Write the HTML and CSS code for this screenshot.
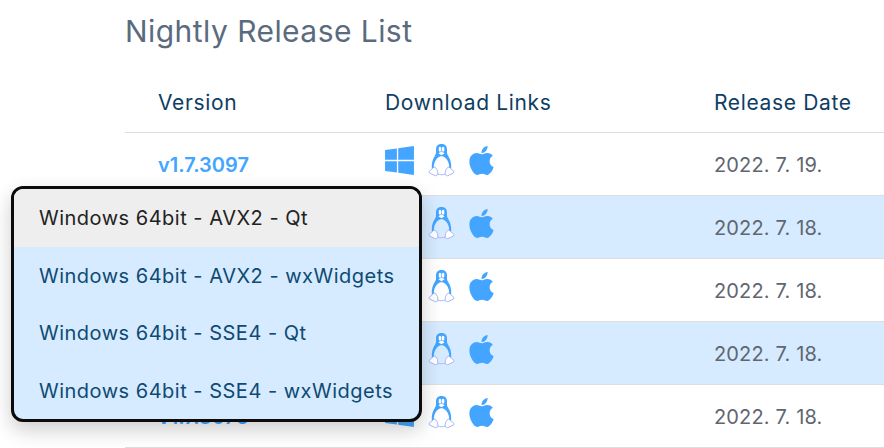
FILE: index.html
```html
<!DOCTYPE html>
<html lang="en">
<head>
    <meta charset="UTF-8">
    <meta name="viewport" content="width=device-width, initial-scale=1.0">
    <title>Nightly Release List</title>
    <link rel="stylesheet" href="styles.css">
</head>
<body>
    <svg class="sprites" width="0" height="0">
        <symbol id="ico-win" viewBox="0 0 448 512">
            <path d="M0 93.7l183.6-25.3v177.4H0V93.7zm0 324.6l183.6 25.3V268.4H0v149.9zm203.8 28L448 480V268.4H203.8v177.9zm0-380.6v180.1H448V32L203.8 65.7z"/>
        </symbol>
        <symbol id="ico-tux" viewBox="0 0 27 34">
            <path class="tux-foot" d="M6 24 L1 28.5 L1.5 30 L7.5 32.8 L10 31.5 L9.5 27.5 L7.5 24.5 Z M21 24 L26 28.5 L25.5 30 L19.5 32.8 L17 31.5 L17.5 27.5 L19.5 24.5 Z"/>
            <path class="tux-foot" d="M10 31.2 C12 31.9 15 31.9 17 31.2"/>
            <path class="tux-fill" d="M13.5 1 C9.3 1 8 3.6 8 6.8 C8 9.8 8.2 10.8 6.8 13 C5 15.7 3.4 19.6 3.8 25.4 L5.8 24.2 C5.6 20.8 7.1 17.7 9 15.4 C10.6 13.8 12 13.2 13.5 13.2 C15 13.2 16.4 13.8 18 15.4 C19.9 17.7 21.4 20.8 21.2 24.2 L23.2 25.4 C23.6 19.6 22 15.7 20.2 13 C18.8 10.8 19 9.8 19 6.8 C19 3.6 17.7 1 13.5 1 Z"/>
            <path class="tux-eye" d="M10.8 6.2a1.3 1.8 0 1 0 2.4 0a1.3 1.8 0 1 0-2.4 0zM13.9 6.2a1.3 1.8 0 1 0 2.4 0a1.3 1.8 0 1 0-2.4 0z"/>
            <path class="tux-eye" d="M10.3 10.2 L13.5 8.6 L16.7 10.2 L13.5 12.2 Z"/>
        </symbol>
        <symbol id="ico-apple" viewBox="0 0 384 512">
            <path d="M318.7 268.7c-.2-36.7 16.4-64.4 50-84.8-18.8-26.9-47.2-41.7-84.7-44.6-35.5-2.8-74.3 20.7-88.5 20.7-15 0-49.4-19.7-76.4-19.7C63.3 141.2 4 184.8 4 273.5q0 39.3 14.4 81.2c12.8 36.7 59 126.7 107.2 125.2 25.2-.6 43-17.9 75.8-17.9 31.8 0 48.3 17.9 76.4 17.9 48.6-.7 90.4-82.5 102.6-119.3-65.2-30.7-61.7-90-61.7-91.9zm-56.6-164.2c27.3-32.4 24.8-61.9 24-72.5-24.1 1.4-52 16.4-67.9 34.9-17.5 19.8-27.8 44.3-25.6 71.9 26.1 2 49.9-11.4 69.5-34.3z"/>
        </symbol>
    </svg>

    <div class="content">
        <h2>Nightly Release List</h2>
        <table class="releases">
            <thead>
                <tr>
                    <th class="col-version">Version</th>
                    <th class="col-links">Download Links</th>
                    <th class="col-date">Release Date</th>
                </tr>
            </thead>
            <tbody>
                <tr>
                    <td><a href="#">v1.7.3097</a></td>
                    <td><div class="links">
                        <svg class="ico win"><use href="#ico-win"/></svg>
                        <svg class="ico tux"><use href="#ico-tux"/></svg>
                        <svg class="ico apple"><use href="#ico-apple"/></svg>
                    </div></td>
                    <td class="date">2022. 7. 19.</td>
                </tr>
                <tr>
                    <td></td>
                    <td><div class="links">
                        <svg class="ico win"><use href="#ico-win"/></svg>
                        <svg class="ico tux"><use href="#ico-tux"/></svg>
                        <svg class="ico apple"><use href="#ico-apple"/></svg>
                    </div></td>
                    <td class="date">2022. 7. 18.</td>
                </tr>
                <tr>
                    <td></td>
                    <td><div class="links">
                        <svg class="ico win"><use href="#ico-win"/></svg>
                        <svg class="ico tux"><use href="#ico-tux"/></svg>
                        <svg class="ico apple"><use href="#ico-apple"/></svg>
                    </div></td>
                    <td class="date">2022. 7. 18.</td>
                </tr>
                <tr>
                    <td></td>
                    <td><div class="links">
                        <svg class="ico win"><use href="#ico-win"/></svg>
                        <svg class="ico tux"><use href="#ico-tux"/></svg>
                        <svg class="ico apple"><use href="#ico-apple"/></svg>
                    </div></td>
                    <td class="date">2022. 7. 18.</td>
                </tr>
                <tr>
                    <td><a href="#">v1.7.3076</a></td>
                    <td><div class="links">
                        <svg class="ico win"><use href="#ico-win"/></svg>
                        <svg class="ico tux"><use href="#ico-tux"/></svg>
                        <svg class="ico apple"><use href="#ico-apple"/></svg>
                    </div></td>
                    <td class="date">2022. 7. 18.</td>
                </tr>
            </tbody>
        </table>
    </div>

    <ul class="menu">
        <li class="active">Windows 64bit - AVX2 - Qt</li>
        <li>Windows 64bit - AVX2 - wxWidgets</li>
        <li>Windows 64bit - SSE4 - Qt</li>
        <li>Windows 64bit - SSE4 - wxWidgets</li>
    </ul>
</body>
</html>
```

FILE: styles.css
```css
html, body {
    margin: 0;
    padding: 0;
    height: 448px;
    overflow: hidden;
    background: #fff;
    font-family: Inter, "Noto Sans", sans-serif;
}
.sprites {
    position: absolute;
}
.content {
    padding-left: 125px;
    width: 800px;
}
h2 {
    margin: 0;
    padding-top: 11px;
    height: 59px;
    box-sizing: border-box;
    font-size: 30px;
    line-height: 40px;
    font-weight: 400;
    letter-spacing: 0.45px;
    color: #5b6b7e;
}
.releases {
    width: 800px;
    table-layout: fixed;
    border-collapse: collapse;
}
.releases th {
    height: 73px;
    padding: 15px 0 0 33px;
    box-sizing: border-box;
    border-bottom: 1px solid #dedede;
    text-align: left;
    font-size: 21px;
    font-weight: 400;
    letter-spacing: 0.65px;
    color: #0f3d63;
}
.col-version { width: 227px; }
.col-links { width: 329px; }
.releases td {
    height: 63px;
    padding: 2px 0 0 33px;
    box-sizing: border-box;
    border-bottom: 1px solid #dedede;
    font-size: 20px;
}
.releases tbody tr:nth-child(even) {
    background: #d6ebff;
}
.releases a {
    color: #43a5ff;
    font-weight: 600;
    letter-spacing: 0;
    text-decoration: none;
}
.date {
    color: #5f6670;
    letter-spacing: 0.15px;
}
.links {
    display: flex;
    align-items: center;
    gap: 14px;
    margin-bottom: 9px;
}
.ico {
    display: block;
    fill: #43a5ff;
}
.win { width: 29px; height: 33px; }
.tux { width: 27px; height: 34px; }
.apple { width: 25px; height: 33px; }
.tux-foot {
    fill: #fff;
    stroke: #a9b8fb;
    stroke-width: 1;
}
.tux-fill { fill: #43a5ff; }
.tux-eye { fill: #fff; }
.menu {
    position: absolute;
    left: 11px;
    top: 186px;
    width: 405px;
    margin: 0;
    padding: 0;
    list-style: none;
    border: 3px solid #0b0b0b;
    border-radius: 12px;
    overflow: hidden;
    background: #d6ebff;
    box-shadow: 0 8px 20px rgba(0, 0, 0, 0.2);
}
.menu li {
    height: 57.5px;
    padding-left: 25px;
    line-height: 58px;
    font-size: 20px;
    letter-spacing: 0.5px;
    color: #0e4a72;
    white-space: nowrap;
}
.menu li.active {
    background: #eeeeee;
    color: #222;
}
```
